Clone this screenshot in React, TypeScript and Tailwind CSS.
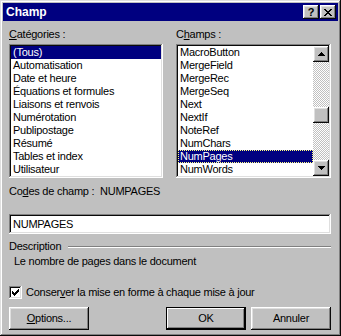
const raised =
  "shadow-[inset_-1px_-1px_0_#0a0a0a,inset_1px_1px_0_#fff,inset_-2px_-2px_0_#808080,inset_2px_2px_0_#dfdfdf]";
const sunken =
  "shadow-[inset_-1px_-1px_0_#fff,inset_1px_1px_0_#808080,inset_-2px_-2px_0_#dfdfdf,inset_2px_2px_0_#0a0a0a]";

const categories = [
  "(Tous)",
  "Automatisation",
  "Date et heure",
  "Équations et formules",
  "Liaisons et renvois",
  "Numérotation",
  "Publipostage",
  "Résumé",
  "Tables et index",
  "Utilisateur",
];

const fields = [
  "MacroButton",
  "MergeField",
  "MergeRec",
  "MergeSeq",
  "Next",
  "NextIf",
  "NoteRef",
  "NumChars",
  "NumPages",
  "NumWords",
];

function Arrow({ down }: { down?: boolean }) {
  const rows = down ? [0, 1, 2, 3] : [3, 2, 1, 0];
  return (
    <svg width="7" height="4" viewBox="0 0 7 4" shapeRendering="crispEdges">
      {rows.map((r, i) => (
        <rect key={i} x={r} y={i} width={7 - r * 2} height={1} fill="#000" />
      ))}
    </svg>
  );
}

function ScrollButton({ down }: { down?: boolean }) {
  return (
    <div className={`w-[16px] h-[16px] bg-[#c0c0c0] flex items-center justify-center ${raised}`}>
      <Arrow down={down} />
    </div>
  );
}

function CloseGlyph() {
  const rows = [
    [0, 1, 6, 7],
    [1, 2, 5, 6],
    [2, 3, 4, 5],
    [3, 4],
    [2, 3, 4, 5],
    [1, 2, 5, 6],
    [0, 1, 6, 7],
  ];
  return (
    <svg width="8" height="7" viewBox="0 0 8 7" shapeRendering="crispEdges">
      {rows.map((cols, y) =>
        cols.map((x) => <rect key={`${y}-${x}`} x={x} y={y} width={1} height={1} fill="#000" />)
      )}
    </svg>
  );
}

function CheckGlyph() {
  // runs of black pixels: y, x, width
  const runs = [
    { y: 0, x: 6, w: 1 },
    { y: 1, x: 5, w: 2 },
    { y: 2, x: 0, w: 1 },
    { y: 2, x: 4, w: 3 },
    { y: 3, x: 0, w: 2 },
    { y: 3, x: 3, w: 3 },
    { y: 4, x: 0, w: 5 },
    { y: 5, x: 1, w: 3 },
    { y: 6, x: 2, w: 1 },
  ];
  return (
    <svg width="7" height="7" viewBox="0 0 7 7" shapeRendering="crispEdges">
      {runs.map((r, i) => (
        <rect key={i} x={r.x} y={r.y} width={r.w} height={1} fill="#000" />
      ))}
    </svg>
  );
}

function Button({ children, isDefault }: { children: React.ReactNode; isDefault?: boolean }) {
  const shadow = isDefault
    ? "shadow-[inset_0_0_0_1px_#000,inset_-2px_-2px_0_#000,inset_2px_2px_0_#fff,inset_-3px_-3px_0_#808080]"
    : raised;
  return (
    <div className={`w-[80px] h-[23px] bg-[#c0c0c0] flex items-center justify-center ${shadow}`}>
      {children}
    </div>
  );
}

export default function App() {
  return (
    <div className="w-[341px] h-[336px] bg-[#c0c0c0] p-[3px] flex flex-col text-black text-[11px] leading-[13px] tracking-[-0.25px] whitespace-nowrap font-['Liberation_Sans',Arial,sans-serif] shadow-[inset_-1px_-1px_0_#0a0a0a,inset_1px_1px_0_#dfdfdf,inset_-2px_-2px_0_#808080,inset_2px_2px_0_#fff]">
      <div className="h-[18px] bg-[#000080] flex items-center justify-between pl-[3px] pr-[2px]">
        <span className="text-white font-bold text-[12px] tracking-normal">Champ</span>
        <div className="flex gap-[1px]">
          <div className={`w-[16px] h-[14px] bg-[#c0c0c0] flex items-center justify-center font-bold text-[11px] leading-[14px] ${raised}`}>
            ?
          </div>
          <div className={`w-[16px] h-[14px] bg-[#c0c0c0] flex items-center justify-center ${raised}`}>
            <CloseGlyph />
          </div>
        </div>
      </div>

      <div className="flex-1 flex flex-col pl-[6px] pr-[7px]">
        <div className="mt-[7px] flex gap-[13px]">
          <div className="w-[154px] flex flex-col">
            <span>
              <u>C</u>atégories :
            </span>
            <div className={`mt-[3px] h-[134px] bg-white p-[2px] ${sunken}`}>
              {categories.map((c, i) => (
                <div
                  key={c}
                  className={`h-[13px] pl-[2px] ${i === 0 ? "bg-[#000080] text-white" : ""}`}
                >
                  {c}
                </div>
              ))}
            </div>
          </div>

          <div className="w-[155px] flex flex-col">
            <span>
              C<u>h</u>amps :
            </span>
            <div className={`mt-[3px] h-[134px] bg-white p-[2px] flex ${sunken}`}>
              <div className="flex-1">
                {fields.map((f) => (
                  <div
                    key={f}
                    className={`h-[13px] pl-[1px] leading-[11px] border ${
                      f === "NumPages"
                        ? "bg-[#000080] text-white border-dotted border-[#ffff80]"
                        : "border-transparent"
                    }`}
                  >
                    {f}
                  </div>
                ))}
              </div>
              <div className="w-[16px] flex flex-col">
                <ScrollButton />
                <div className="h-[45px] bg-[image:repeating-conic-gradient(#c0c0c0_0_25%,#fff_0_50%)] bg-[length:2px_2px]" />
                <div className={`h-[16px] bg-[#c0c0c0] ${raised}`} />
                <div className="flex-1 bg-[image:repeating-conic-gradient(#c0c0c0_0_25%,#fff_0_50%)] bg-[length:2px_2px]" />
                <ScrollButton down />
              </div>
            </div>
          </div>
        </div>

        <div className="mt-[7px] flex">
          <span className="w-[91px] shrink-0">
            Co<u>d</u>es de champ :
          </span>
          <span>NUMPAGES</span>
        </div>

        <div className={`mt-[16px] h-[20px] bg-white flex items-center pl-[4px] ${sunken}`}>NUMPAGES</div>

        <div className="mt-[6px] flex items-center">
          <span>Description</span>
          <div className="flex-1 ml-[7px] border-t border-t-[#808080] border-b border-b-white" />
        </div>
        <div className="mt-[2px] pl-[5px]">Le nombre de pages dans le document</div>

        <div className="mt-[18px] flex items-center gap-[4px]">
          <div className={`w-[13px] h-[13px] bg-white flex items-center justify-center ${sunken}`}>
            <CheckGlyph />
          </div>
          <span>
            Conser<u>v</u>er la mise en forme à chaque mise à jour
          </span>
        </div>

        <div className="mt-[8px] flex justify-between">
          <Button>
            <span>
              <u>O</u>ptions...
            </span>
          </Button>
          <div className="flex gap-[5px]">
            <Button isDefault>OK</Button>
            <Button>Annuler</Button>
          </div>
        </div>
      </div>
    </div>
  );
}
